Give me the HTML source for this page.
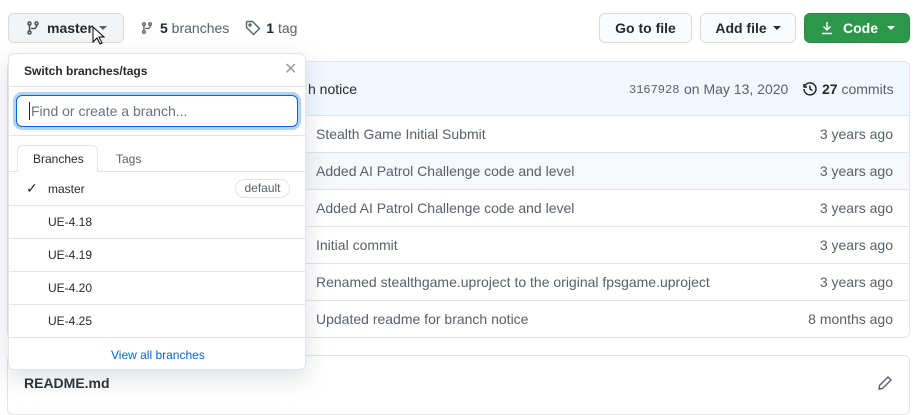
<!DOCTYPE html>
<html><head><style>
body{margin:0;width:914px;height:403px;overflow:hidden;background:#fff;font-family:"Liberation Sans",sans-serif;color:#24292e;font-size:14px;position:relative}
.abs{position:absolute}
.btn{position:absolute;top:13px;height:30px;border:1px solid #d8dadd;border-radius:6px;background:#fafbfc;box-sizing:border-box;font-size:14px;font-weight:bold;display:flex;align-items:center;justify-content:center}
.row{position:absolute;left:8px;width:901px;height:37px;border-top:1px solid #e1e4e8;box-sizing:border-box;font-size:14px;color:#586069}
.row .m{position:absolute;left:308px;top:10px}
.row .t{position:absolute;right:16px;top:10px}
.br{position:absolute;left:8px;width:298px;height:33px;border-top:1px solid #e1e4e8;box-sizing:border-box;font-size:12px;color:#24292e}
.br span{position:absolute;left:40px;top:9px}
.caret{display:inline-block;width:0;height:0;border-left:4px solid transparent;border-right:4px solid transparent;border-top:4px solid currentColor;margin-left:6px}
</style></head><body>
<div class="btn" style="left:8px;width:116px;justify-content:flex-start;padding-left:16px;background:#f3f4f6">
<svg width="16" height="16" viewBox="0 0 16 16" fill="none" stroke="#444d56" stroke-width="1.5"><circle cx="4.5" cy="3.5" r="1.5"/><circle cx="11.5" cy="3.5" r="1.5"/><circle cx="4.5" cy="12.5" r="1.5"/><path d="M4.5 5v6M11.5 5v1a2.5 2.5 0 0 1-2.5 2.5H6"/></svg>
<span style="margin-left:6px">master</span><span class="caret" style="color:#586069"></span></div>
<svg class="abs" style="left:92px;top:26px" width="14" height="20" viewBox="0 0 14 20"><path d="M1 1v15l4-4 3 6 2-1-3-6h5z" fill="#fff" stroke="#000" stroke-width="1"/></svg>
<div class="abs" style="left:140px;top:20px;font-size:14px;color:#586069;display:flex;align-items:center">
<svg width="14" height="16" viewBox="0 0 16 16" fill="none" stroke="#586069" stroke-width="1.5"><circle cx="4.5" cy="3.5" r="1.5"/><circle cx="11.5" cy="3.5" r="1.5"/><circle cx="4.5" cy="12.5" r="1.5"/><path d="M4.5 5v6M11.5 5v1a2.5 2.5 0 0 1-2.5 2.5H6"/></svg>
<b style="color:#24292e;margin-left:6px">5</b>&nbsp;branches
<svg style="margin-left:16px" width="16" height="16" viewBox="0 0 16 16" fill="none" stroke="#586069" stroke-width="1.4"><path d="M1.5 2.5v5l7 7 6-6-7-7h-5a1 1 0 0 0-1 1z"/><circle cx="5" cy="5" r="1"/></svg>
<b style="color:#24292e;margin-left:5px">1</b>&nbsp;tag</div>
<div class="btn" style="left:599px;width:93px">Go to file</div>
<div class="btn" style="left:700px;width:96px">Add file<span class="caret"></span></div>
<div class="btn" style="left:804px;width:106px;background:#2c974b;border-color:#2a8a46;color:#fff">
<svg width="16" height="16" viewBox="0 0 16 16" fill="none" stroke="#fff" stroke-width="1.4"><path d="M8 2v8M4.5 6.5 8 10l3.5-3.5M3 13.5h10"/></svg><span style="margin-left:8px">Code</span><span class="caret" style="margin-left:9px"></span></div>

<div class="abs" style="left:7px;top:61px;width:903px;height:277px;border:1px solid #e1e4e8;border-radius:6px;box-sizing:border-box"></div>
<div class="abs" style="left:8px;top:62px;width:901px;height:53px;background:#f1f8ff;border-radius:6px 6px 0 0"></div>
<div class="abs" style="left:308px;top:81px">h notice</div>
<div class="abs" style="left:629px;top:83px;font-family:'Liberation Mono',monospace;font-size:12px;color:#586069">3167928</div>
<div class="abs" style="left:684px;top:81px;color:#586069">on May 13, 2020</div>
<div class="abs" style="left:802px;top:81px;display:flex;align-items:center;color:#586069">
<svg width="16" height="16" viewBox="0 0 16 16" fill="none" stroke="#24292e" stroke-width="1.5"><path d="M2 3v3h3"/><path d="M2.3 6A6 6 0 1 1 2 8"/><path d="M8 4.5V8l2.5 1.5"/></svg><b style="color:#24292e;margin-left:4px">27</b>&nbsp;commits</div>
<div class="row" style="top:115px"><span class="m">Stealth Game Initial Submit</span><span class="t">3 years ago</span></div>
<div class="row" style="top:152px;background:#f6f8fa"><span class="m">Added AI Patrol Challenge code and level</span><span class="t">3 years ago</span></div>
<div class="row" style="top:189px"><span class="m">Added AI Patrol Challenge code and level</span><span class="t">3 years ago</span></div>
<div class="row" style="top:226px"><span class="m">Initial commit</span><span class="t">3 years ago</span></div>
<div class="row" style="top:263px"><span class="m">Renamed stealthgame.uproject to the original fpsgame.uproject</span><span class="t">3 years ago</span></div>
<div class="row" style="top:300px;height:37px"><span class="m">Updated readme for branch notice</span><span class="t">8 months ago</span></div>

<div class="abs" style="left:7px;top:355px;width:903px;height:60px;border:1px solid #e1e4e8;border-radius:6px;box-sizing:border-box"></div>
<div class="abs" style="left:24px;top:375px;font-weight:bold;font-size:14px">README.md</div>
<svg class="abs" style="left:877px;top:375px" width="16" height="16" viewBox="0 0 16 16" fill="none" stroke="#586069" stroke-width="1.4"><path d="M11 2l3 3-8.5 8.5L2 14l.5-3.5z"/></svg>

<div class="abs" style="left:8px;top:53px;width:298px;height:317px;background:#fff;border:1px solid #e1e4e8;border-radius:6px;box-sizing:border-box;box-shadow:0 8px 24px rgba(140,149,159,.3)"></div>
<div class="abs" style="left:24px;top:64px;font-size:12px;font-weight:bold">Switch branches/tags</div>
<div class="abs" style="left:284px;top:59px;font-size:16px;color:#959da5">✕</div>
<div class="abs" style="left:9px;top:86px;width:296px;border-top:1px solid #e1e4e8"></div>
<div class="abs" style="left:16px;top:95px;width:282px;height:32px;border:1px solid #0366d6;border-radius:6px;box-sizing:border-box;box-shadow:0 0 0 3px rgba(3,102,214,.3)"></div>
<div class="abs" style="left:29px;top:102px;width:1px;height:18px;background:#24292e"></div>
<div class="abs" style="left:31px;top:103px;color:#6a737d;font-size:14px">Find or create a branch...</div>
<div class="abs" style="left:9px;top:135px;width:296px;border-top:1px solid #e1e4e8"></div>
<div class="abs" style="left:9px;top:171px;width:296px;border-top:1px solid #e1e4e8"></div>
<div class="abs" style="left:17px;top:145px;width:81px;height:27px;border:1px solid #e1e4e8;border-bottom:none;border-radius:6px 6px 0 0;background:#fff;box-sizing:border-box"></div>
<div class="abs" style="left:33px;top:152px;font-size:12px">Branches</div>
<div class="abs" style="left:116px;top:152px;font-size:12px;color:#586069">Tags</div>
<div class="abs" style="left:26px;top:180px;font-size:14px">✓</div>
<div class="abs" style="left:48px;top:182px;font-size:12px">master</div>
<div class="abs" style="left:235px;top:179px;width:55px;height:19px;border:1px solid #e1e4e8;border-radius:10px;box-sizing:border-box;font-size:12px;color:#586069;text-align:center;line-height:17px">default</div>
<div class="br" style="top:205px"><span>UE-4.18</span></div>
<div class="br" style="top:238px"><span>UE-4.19</span></div>
<div class="br" style="top:271px"><span>UE-4.20</span></div>
<div class="br" style="top:304px"><span>UE-4.25</span></div>
<div class="br" style="top:337px;border-radius:0 0 6px 6px"><span style="left:103px;top:10px;color:#0366d6">View all branches</span></div>
</body></html>
